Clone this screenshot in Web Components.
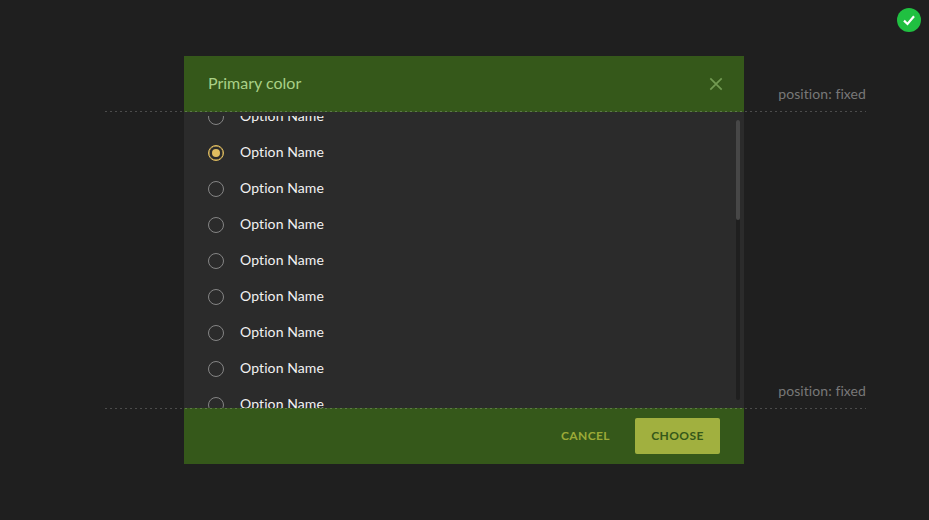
<!DOCTYPE html>
<html lang="en">
<head>
<meta charset="utf-8">
<title>Primary color</title>
<style>
html,body{margin:0;width:929px;height:520px;overflow:hidden;background:#1f1f1f;font-family:Lato,"Open Sans",sans-serif}
</style>
</head>
<body>
<dialog-stage></dialog-stage>
<script>
function define(name, html){
  customElements.define(name, class extends HTMLElement{
    connectedCallback(){
      if(this.shadowRoot) return;
      this.attachShadow({mode:'open'}).innerHTML = html;
    }
  });
}

define('radio-option', `<style>
:host{display:flex;align-items:center;height:36px;gap:16px;color:#f2f2f2;font-size:14px;letter-spacing:.1px}
i{box-sizing:border-box;width:16px;height:16px;border-radius:50%;border:1px solid #858585;display:grid;place-items:center;flex:none}
:host([checked]) i{border-color:#e0bd60;box-shadow:inset 0 0 0 .4px #e0bd60}
:host([checked]) i::after{content:"";width:8px;height:8px;border-radius:50%;background:#e0bd60}
span{line-height:18px;white-space:nowrap;margin-top:-2px}
</style><i></i><span><slot></slot></span>`);

define('action-button', `<style>
:host{display:flex;align-items:center;justify-content:center;box-sizing:border-box;height:36px;font-size:12px;font-weight:700;letter-spacing:.4px;color:#9caa37;width:81px}
:host([primary]){width:85px;background:#a1b03f;color:#35581a;border-radius:2px}
span{line-height:16px;white-space:nowrap}
</style><span><slot></slot></span>`);

define('scroll-bar', `<style>
:host{display:block;width:4px;height:280px;background:#1f1f1f;border-radius:2px;margin:4px 4px 0 0}
div{height:100px;background:#474747;border-radius:2px}
</style><div></div>`);

define('guide-note', `<style>
:host{position:absolute;left:105px;width:761px;height:26px;display:flex;justify-content:flex-end;align-items:flex-start;color:#787878;font-size:14px;letter-spacing:.08px;
background:repeating-linear-gradient(90deg,rgba(255,255,255,.2) 0 2px,transparent 2px 5px) 0 100%/100% 1px no-repeat;pointer-events:none}
:host([at=top]){top:86px}
:host([at=bottom]){top:383px}
span{line-height:16px;white-space:nowrap}
</style><span><slot></slot></span>`);

define('status-badge', `<style>
:host{position:absolute;left:897px;top:8px;width:24px;height:24px}
svg{display:block}
</style><svg width="24" height="24" viewBox="0 0 24 24"><circle cx="12" cy="12" r="12" fill="#20c041"/><path d="M7 12.6 10.5 16 17 8.2" fill="none" stroke="#fff" stroke-width="2.2"/></svg>`);

define('choice-dialog', `<style>
:host{display:grid;grid-template-rows:56px 296px 56px;width:560px;background:#2b2b2b}
header,footer{background:#35581a;display:flex;align-items:center;padding:0 24px;box-sizing:border-box}
header{justify-content:space-between;padding-right:21px;color:#a9d087;font-size:16px;letter-spacing:0}
header>span{line-height:20px;margin-top:-2px}
svg{display:block}
main{display:flex;justify-content:space-between;padding-top:4px;min-height:0;overflow:hidden}
.list{height:292px;overflow:hidden;padding-left:24px;flex:1}
.list>div{margin-top:-17px}
footer{justify-content:flex-end;gap:9px}
</style>
<header><span><slot name="title"></slot></span><svg width="14" height="14" viewBox="0 0 14 14"><path d="M1.3 1.3 12.7 12.7M12.7 1.3 1.3 12.7" stroke="#729a52" stroke-width="1.7"/></svg></header>
<main><div class="list"><div><slot></slot></div></div><scroll-bar></scroll-bar></main>
<footer><slot name="actions"></slot></footer>`);

define('dialog-stage', `<style>
:host{display:flex;position:relative;width:929px;height:520px;box-sizing:border-box;padding:56px 0 0 184px;align-items:flex-start}
</style>
<choice-dialog>
<span slot="title">Primary color</span>
${Array.from({length:9},(_,i)=>`<radio-option${i===1?' checked':''}>Option Name</radio-option>`).join('')}
<action-button slot="actions">CANCEL</action-button>
<action-button slot="actions" primary>CHOOSE</action-button>
</choice-dialog>
<guide-note at="top">position: fixed</guide-note>
<guide-note at="bottom">position: fixed</guide-note>
<status-badge></status-badge>`);
</script>
</body>
</html>
